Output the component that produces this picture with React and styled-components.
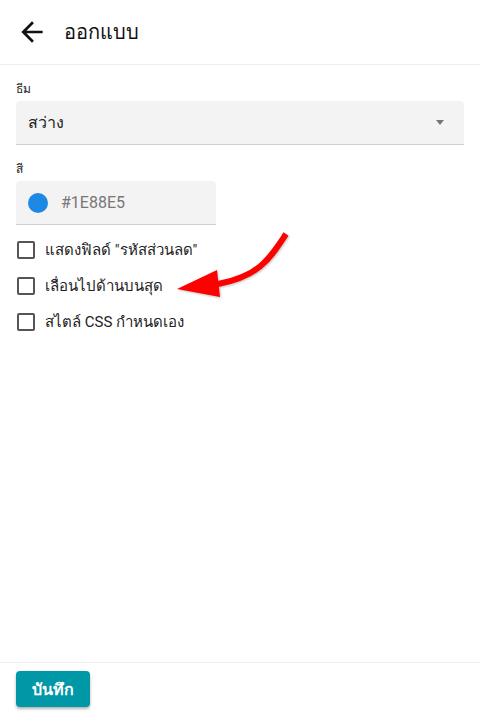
import React from "react";
import styled, { createGlobalStyle } from "styled-components";

const GlobalStyle = createGlobalStyle`
  html, body {
    margin: 0;
    padding: 0;
    background: #fff;
  }
  body {
    font-family: Roboto, "Noto Sans", sans-serif;
    color: #212121;
  }
`;

const Page = styled.div`
  position: relative;
  height: 715px;
  display: flex;
  flex-direction: column;
`;

const Header = styled.header`
  height: 65px;
  display: flex;
  align-items: center;
  padding: 0 20px;
  gap: 20px;
  border-bottom: 1px solid #eeeeee;
  box-sizing: border-box;
`;

const BackButton = styled.button`
  border: 0;
  background: none;
  padding: 0;
  width: 24px;
  height: 24px;
  display: flex;
  cursor: pointer;
`;

const Title = styled.h1`
  margin: 0;
  font-size: 20px;
  font-weight: 400;
  color: #111;
`;

const Body = styled.main`
  flex: 1;
  padding: 14px 16px 0;
  display: flex;
  flex-direction: column;
`;

const Label = styled.label`
  display: block;
  font-size: 12px;
  color: #222;
  line-height: 20px;
  margin-bottom: 2px;
`;

const Field = styled.div`
  width: ${(p) => p.$width};
  height: 44px;
  box-sizing: border-box;
  background: #f3f3f3;
  border-radius: 4px 4px 0 0;
  border-bottom: 1px solid #cfcfcf;
  display: flex;
  align-items: center;
  padding: 0 12px;
  gap: 13px;
  margin-bottom: 14px;
`;

const FieldText = styled.span`
  flex: 1;
  font-size: 16px;
  color: ${(p) => (p.$muted ? "#777" : "#222")};
`;

const Caret = styled.span`
  width: 0;
  height: 0;
  border-left: 4px solid transparent;
  border-right: 4px solid transparent;
  border-top: 5px solid #777;
  margin-right: 8px;
`;

const Swatch = styled.span`
  width: 20px;
  height: 20px;
  border-radius: 50%;
  background: ${(p) => p.$color};
`;

const CheckList = styled.div`
  display: flex;
  flex-direction: column;
  gap: 14px;
`;

const CheckRow = styled.label`
  display: flex;
  align-items: center;
  gap: 10px;
  font-size: 15px;
  line-height: 22px;
  color: #222;
`;

const Box = styled.span`
  width: 18px;
  height: 18px;
  box-sizing: border-box;
  border: 2px solid #555;
  border-radius: 2px;
  margin-left: 1px;
`;

const Footer = styled.footer`
  border-top: 1px solid #eeeeee;
  padding: 8px 16px 8px;
`;

const SaveButton = styled.button`
  background: #0097a7;
  color: #fff;
  border: 0;
  border-radius: 4px;
  height: 36px;
  padding: 0 16px;
  font-family: Roboto, "Noto Sans", sans-serif;
  font-size: 16px;
  font-weight: 700;
  box-shadow: 0 2px 3px rgba(0, 0, 0, 0.3);
`;

const Annotation = styled.svg`
  position: absolute;
  left: 170px;
  top: 228px;
  overflow: visible;
  filter: drop-shadow(1px 1px 1px rgba(0, 0, 0, 0.25));
`;

const options = [
  'แสดงฟิลด์ "รหัสส่วนลด"',
  "เลื่อนไปด้านบนสุด",
  "สไตล์ CSS กำหนดเอง",
];

export default function App() {
  return (
    <Page>
      <GlobalStyle />
      <Header>
        <BackButton aria-label="back">
          <svg width="24" height="24" viewBox="3 3 18 18">
            <path
              d="M20 11H7.83l5.59-5.59L12 4l-8 8 8 8 1.41-1.41L7.83 13H20v-2z"
              fill="#111"
            />
          </svg>
        </BackButton>
        <Title>ออกแบบ</Title>
      </Header>
      <Body>
        <Label>ธีม</Label>
        <Field $width="100%">
          <FieldText>สว่าง</FieldText>
          <Caret />
        </Field>
        <Label>สี</Label>
        <Field $width="200px">
          <Swatch $color="#1e88e5" />
          <FieldText $muted>#1E88E5</FieldText>
        </Field>
        <CheckList>
          {options.map((o) => (
            <CheckRow key={o}>
              <Box />
              {o}
            </CheckRow>
          ))}
        </CheckList>
      </Body>
      <Footer>
        <SaveButton>บันทึก</SaveButton>
      </Footer>
      <Annotation width="130" height="80">
        <path
          d="M116 6 C 100 30, 90 48, 48 56"
          stroke="#ff0000"
          strokeWidth="6"
          fill="none"
        />
        <polygon points="7,61 47,42 50,69" fill="#ff0000" />
      </Annotation>
    </Page>
  );
}
